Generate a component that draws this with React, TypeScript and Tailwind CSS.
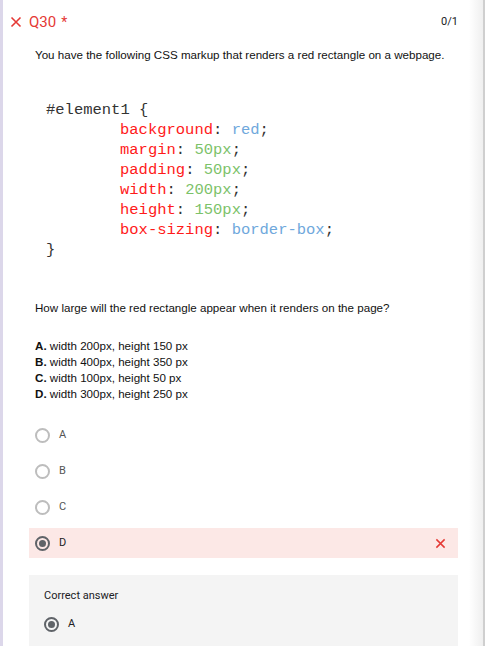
import React from "react";

const sans = { fontFamily: '"Liberation Sans", Arial, sans-serif' };
const roboto = { fontFamily: 'Roboto, "Liberation Sans", sans-serif' };
const mono = { fontFamily: '"Liberation Mono", "Courier New", monospace' };

function Cross({ size = 12, className = "" }: { size?: number; className?: string }) {
  return (
    <svg width={size} height={size} viewBox="0 0 12 12" className={className}>
      <path d="M1.5 1.5 L10.5 10.5 M10.5 1.5 L1.5 10.5" stroke="currentColor" strokeWidth="1.6" fill="none" />
    </svg>
  );
}

function Radio({ checked = false }: { checked?: boolean }) {
  return checked ? (
    <span className="flex h-[15px] w-[15px] flex-none items-center justify-center rounded-full border-2 border-[#5f6368]">
      <span className="h-[7px] w-[7px] rounded-full bg-[#5f6368]" />
    </span>
  ) : (
    <span className="h-[15px] w-[15px] flex-none rounded-full border-2 border-[#bdbdbd]" />
  );
}

const codeLines: [string, string, string][] = [
  ["background", "red", "text-[#6fa8dc]"],
  ["margin", "50px", "text-[#7cc26a]"],
  ["padding", "50px", "text-[#7cc26a]"],
  ["width", "200px", "text-[#7cc26a]"],
  ["height", "150px", "text-[#7cc26a]"],
  ["box-sizing", "border-box", "text-[#6fa8dc]"],
];

const options = [
  ["A", "width 200px, height 150 px"],
  ["B", "width 400px, height 350 px"],
  ["C", "width 100px, height 50 px"],
  ["D", "width 300px, height 250 px"],
];

export default function App() {
  return (
    <div className="flex h-[646px] w-[485px] overflow-hidden bg-white">
      {/* card left accent */}
      <div className="w-[3px] flex-none bg-[#dcd7ea]" />

      <div className="flex-1 pl-[26px] pr-[11px]">
        {/* Header */}
        <div className="mt-[13px] flex h-[18px] items-center">
          <div className="ml-[-19px] flex items-center text-[#e53935]" style={roboto}>
            <Cross size={12} />
            <span className="ml-[7px] text-[15px]">Q30</span>
            <span className="ml-[5px] text-[14px]">*</span>
          </div>
          <span className="ml-auto text-[11px] text-[#202124]" style={roboto}>
            0/1
          </span>
        </div>

        {/* Question */}
        <p className="ml-[6px] mt-[16px] text-[11.6px] leading-[16px] text-[#111]" style={sans}>
          You have the following CSS markup that renders a red rectangle on a webpage.
        </p>

        <div className="ml-[17px] mt-[37px] text-[15.5px] leading-[20px] text-[#333]" style={mono}>
          <div>#element1 {"{"}</div>
          {codeLines.map(([prop, val, cls]) => (
            <div key={prop} className="pl-[74px]">
              <span className="text-[#ff1a1a]">{prop}</span>
              <span>: </span>
              <span className={cls}>{val}</span>
              <span>;</span>
            </div>
          ))}
          <div>{"}"}</div>
        </div>

        <p className="ml-[6px] mt-[40px] text-[11.6px] leading-[16px] text-[#111]" style={sans}>
          How large will the red rectangle appear when it renders on the page?
        </p>

        <div className="ml-[6px] mt-[22px] text-[11.6px] leading-[16px] text-[#111]" style={sans}>
          {options.map(([k, t]) => (
            <div key={k}>
              <span className="font-bold">{k}.</span> {t}
            </div>
          ))}
        </div>

        {/* Choices */}
        <div className="mt-[18px] flex w-[429px] flex-col gap-[6px]" style={roboto}>
          {["A", "B", "C"].map((k) => (
            <div key={k} className="flex h-[30px] items-center pl-[6px]">
              <Radio />
              <span className="ml-[9px] text-[11px] text-[#555]">{k}</span>
            </div>
          ))}
          <div className="flex h-[30px] items-center bg-[#fce8e6] pl-[6px] pr-[12px]">
            <Radio checked />
            <span className="ml-[9px] text-[11px] text-[#202124]">D</span>
            <Cross size={11} className="ml-auto text-[#e53935]" />
          </div>
        </div>

        {/* Correct answer */}
        <div className="mt-[17px] h-[100px] w-[429px] bg-[#f4f4f4] pl-[15px] pt-[13px]" style={roboto}>
          <div className="text-[11px] leading-[16px] text-[#202124]">Correct answer</div>
          <div className="mt-[12px] flex h-[16px] items-center">
            <Radio checked />
            <span className="ml-[9px] text-[11px] text-[#202124]">A</span>
          </div>
        </div>
      </div>

      {/* right edge shadow */}
      <div className="w-[14px] flex-none bg-gradient-to-r from-white to-[#efefef]" />
      <div className="w-[2px] flex-none bg-[#cfcfcf]" />
    </div>
  );
}
